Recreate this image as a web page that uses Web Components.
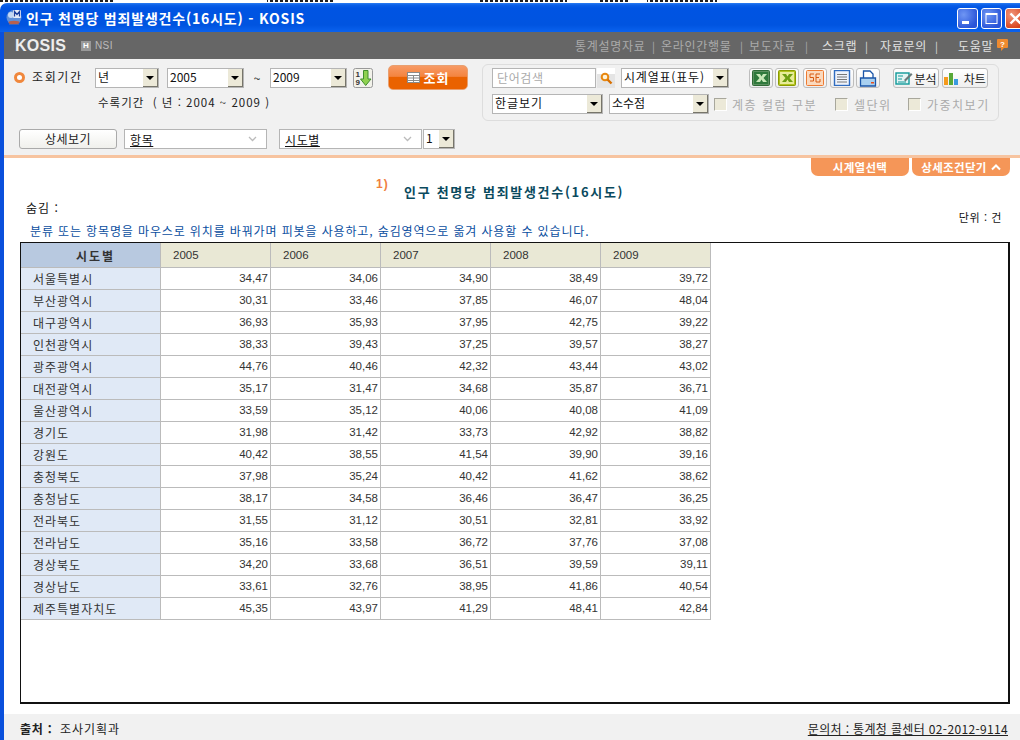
<!DOCTYPE html>
<html lang="ko">
<head>
<meta charset="utf-8">
<title>KOSIS</title>
<style>
    html, body { margin: 0; height: 100%; overflow: hidden; background: #fff; }
    body { font: 12px "Noto Sans CJK KR", "Liberation Sans", sans-serif; color: #222; }
</style>
</head>
<body>
<kosis-window>
    <xp-titlebar slot="titlebar">인구 천명당 범죄발생건수(16시도) - KOSIS</xp-titlebar>
    <kosis-nav slot="nav"></kosis-nav>
    <query-panel slot="query"></query-panel>
    <result-view slot="result"></result-view>
    <source-footer slot="footer"></source-footer>
</kosis-window>

<script>
/**
 * Helper: attach an open shadow root with the given markup.
 */
function mount(el, html){
    el.attachShadow({mode: 'open'}).innerHTML = html;
}

class KosisWindow extends HTMLElement {
    connectedCallback(){
        mount(this, `
<style>
    :host { display: flex; flex-direction: column; width: 1020px; height: 740px; overflow: hidden; }
    /* the window behind only shows the bottoms of its text and icons */
    .strip {
        flex: none; height: 3px; background-color: #fff;
        background-image:
            repeating-linear-gradient(90deg, transparent 0 3px, #fff 3px 5px),
            linear-gradient(90deg, #222 0 115px, #fff 115px 267px, #222 267px 333px, #fff 333px 480px, #222 480px 567px, #fff 567px 600px, #222 600px 630px, #fff 630px 647px, #222 647px 717px, #fff 717px),
            linear-gradient(90deg, #fff 135px, #3a86d8 135px 148px, #fff 148px 160px, #ccc 160px 216px, #fff 216px 240px, #3a86d8 240px 248px, #fff 248px 340px, #3a86d8 340px 347px, #fff 347px 460px, #3a86d8 460px 467px, #fff 467px 580px, #3a86d8 580px 590px, #fff 590px);
        background-size: 100% 2px; background-repeat: no-repeat;
    }
    .frame { flex: 1; min-height: 0; display: flex; flex-direction: column; border-left: 4px solid #0a50dc; }
</style>
<div class="strip"></div>
<slot name="titlebar"></slot>
<div class="frame">
    <slot name="nav"></slot>
    <slot name="query"></slot>
    <slot name="result"></slot>
    <slot name="footer"></slot>
</div>`);
    }
}

class XpTitlebar extends HTMLElement {
    connectedCallback(){
        mount(this, `
<style>
    :host { display: flex; align-items: center; height: 29px; padding-left: 6px; color: #fff; overflow: hidden;
        font: bold 14px "Noto Sans CJK KR", "Liberation Sans", sans-serif;
        border-top-left-radius: 7px;
        background: linear-gradient(#2b7df2 0, #0a5fe8 2px, #0054e3 5px, #0054e0 22px, #0a62ee 100%); }
    .logo { flex: none; margin-right: 4px; }
    .title { flex: 1; white-space: nowrap; letter-spacing: .8px; }
    .btns { flex: none; display: flex; gap: 3px; margin-right: -6px; margin-top: 2px; }
    .btn { width: 21px; height: 21px; border: 1px solid #fff; border-radius: 3px; box-sizing: border-box; display: block; }
    .b { background: radial-gradient(circle at 30% 30%, #6f96f4, #2a55d8 75%); }
    .r { background: radial-gradient(circle at 30% 30%, #f0977c, #d8431c 75%); }
</style>
<svg class="logo" width="16" height="18" viewBox="0 0 16 18">
    <circle cx="8" cy="8.500" r="7.500" fill="#5f8fd8"/>
    <circle cx="5" cy="6" r="3" fill="#c4d8f4"/>
    <rect x="7" y="1" width="8" height="8" rx="1" fill="#e6ecf8"/>
    <path d="M8.500 7.500 V2.500 L11 5.500 L13.500 2.500 V7.500" fill="none" stroke="#1c3f9c" stroke-width="1.300"/>
    <ellipse cx="8" cy="13.500" rx="5.500" ry="1.800" fill="#b8604e"/>
    <path d="M3 15.500 H13" stroke="#3f66b8" stroke-width="1.200"/>
</svg>
<span class="title"><slot></slot></span>
<span class="btns">
    <span class="btn b"><svg width="19" height="19" viewBox="0 0 19 19"><rect x="4" y="12" width="7" height="3" fill="#fff"/></svg></span>
    <span class="btn b"><svg width="19" height="19" viewBox="0 0 19 19"><rect x="4" y="4.500" width="11" height="10" fill="none" stroke="#fff"/><rect x="4" y="4" width="11" height="2" fill="#fff"/></svg></span>
    <span class="btn r"><svg width="19" height="19" viewBox="0 0 19 19"><path d="M4.500 4.500 L14.500 14.500 M14.500 4.500 L4.500 14.500" stroke="#fff" stroke-width="2.400"/></svg></span>
</span>`);
    }
}

class KosisNav extends HTMLElement {
    connectedCallback(){
        mount(this, `
<style>
    :host { display: flex; align-items: center; height: 27px; background: #666; color: #c8c8c8; font-size: 12px; white-space: nowrap; }
    .brand { font: bold 16px "Liberation Sans", sans-serif; color: #eee; margin-left: 11px; width: 55px; letter-spacing: .3px; }
    .h { width: 10px; height: 10px; background: #999; color: #fff; font: bold 8px/10px "Liberation Sans", sans-serif; text-align: center; margin-left: 11px; }
    .nsi { font: 10px "Liberation Sans", sans-serif; color: #bbb; margin-left: 4px; flex: 1; letter-spacing: .4px; }
    a { color: #aaa; letter-spacing: .7px; }
    .s { color: #aaa; width: 9px; font-size: 11px; }
    .lit { color: #e2e2e2; }
    .ls { color: #ddd; }
    svg { margin-right: 12px; }
</style>
<span class="brand">KOSIS</span><span class="h">H</span><span class="nsi">NSI</span>
<a style="width:77px">통계설명자료</a><span class="s">|</span>
<a style="width:79px">온라인간행물</a><span class="s">|</span>
<a style="width:56px">보도자료</a><span class="s" style="width:17px">|</span>
<a class="lit" style="width:43px">스크랩</a><span class="s ls" style="width:15px">|</span>
<a class="lit" style="width:55px">자료문의</a><span class="s ls" style="width:23px">|</span>
<a class="lit" style="width:39px">도움말</a>
<svg width="11" height="13" viewBox="0 0 11 13"><path d="M1 0 H10 Q11 0 11 1 V8 Q11 9 10 9 H7 L4 12 V9 H1 Q0 9 0 8 V1 Q0 0 1 0 Z" fill="#ef8a2e"/><text x="5.500" y="8" font-size="8" font-weight="bold" fill="#fff" text-anchor="middle" font-family="Liberation Sans">?</text></svg>`);
    }
}

class ComboBox extends HTMLElement {
    connectedCallback(){
        mount(this, `
<style>
    :host { display: flex; box-sizing: border-box; height: 20px; flex: none; border: 1px solid #b5b5b5; background: #fff; color: #111; font-size: 12px; }
    .v { flex: 1; padding-left: 2px; line-height: 16px; white-space: nowrap; overflow: hidden; }
    .arrow { flex: none; width: 15px; background: #ece9d8; border-right: 1px solid #77756a; border-bottom: 1px solid #77756a; box-sizing: border-box; position: relative; }
    .arrow::after { content: ""; position: absolute; left: 3px; top: 7px; border: 4px solid transparent; border-top: 4px solid #000; border-bottom: 0; }
</style>
<span class="v"><slot></slot></span><span class="arrow"></span>`);
    }
}

class PivotSelect extends HTMLElement {
    connectedCallback(){
        mount(this, `
<style>
    :host { display: flex; align-items: center; box-sizing: border-box; height: 20px; flex: none; border: 1px solid #b5b5b5; background: #fff; color: #111; font-size: 12px; padding: 0 9px 0 5px; justify-content: space-between; }
    span { text-decoration: underline; line-height: 17px; letter-spacing: .6px; }
    svg { flex: none; }
</style>
<span><slot></slot></span>
<svg width="9" height="6" viewBox="0 0 9 6"><path d="M1 1 L4.500 4.500 L8 1" fill="none" stroke="#bbb" stroke-width="1.300"/></svg>`);
    }
}

class ToolIcon extends HTMLElement {
    connectedCallback(){
        mount(this, `
<style>
    :host { display: inline-flex; align-items: center; justify-content: center; flex: none; box-sizing: border-box; height: 20px; width: 24px; border: 1px solid #bdbdbd; border-radius: 3px; background: linear-gradient(#fff, #efefef); font-size: 12px; color: #222; gap: 1px; }
</style>
<slot></slot>`);
    }
}

class QueryPanel extends HTMLElement {
    connectedCallback(){
        mount(this, `
<style>
    :host { display: flex; box-sizing: border-box; height: 96px; background: #f1f1f1; flex: none; font-size: 12px; color: #222; }
    .left { width: 478px; flex: none; padding-top: 6px; box-sizing: border-box; }
    .row1 { display: flex; align-items: center; height: 25px; }
    .radio { box-sizing: border-box; width: 11px; height: 11px; border: 3px solid #f0873c; border-radius: 50%; background: #fff; margin-left: 10px; flex: none; }
    .lbl { width: 63px; margin-left: 7px; flex: none; letter-spacing: 1.600px; margin-top: -2px; }
    .tilde { width: 26px; text-align: center; flex: none; }
    .sort { margin-left: 6px; flex: none; }
    .go { margin-left: 15px; width: 80px; height: 25px; box-sizing: border-box; flex: none; border-radius: 5px; color: #fff; font-weight: bold; font-size: 13px; display: flex; align-items: center; justify-content: center; gap: 4px; letter-spacing: 1px;
        background: linear-gradient(#f79a64, #f4843f 45%, #ea6200 50%, #ea6200); border: 1px solid #e9a070; }
    .row2 { margin: 5px 0 0 94px; height: 15px; line-height: 15px; white-space: pre; letter-spacing: 1px; font-size: 11.500px; }
    .row3 { display: flex; margin: 19px 0 0 15px; }
    .detail { width: 98px; height: 20px; box-sizing: border-box; border: 1px solid #aaa; border-radius: 3px; background: linear-gradient(#fff, #f0f0ec); text-align: center; line-height: 17px; margin-right: 7px; flex: none; letter-spacing: .4px; }
    .box { width: 517px; height: 57px; box-sizing: border-box; margin-top: 5px; border: 1px solid #ddd; border-radius: 6px; padding: 3px 0 0 9px; flex: none; }
    .r { display: flex; align-items: center; height: 20px; white-space: nowrap; }
    .r + .r { margin-top: 6px; }
    .search { box-sizing: border-box; width: 104px; height: 20px; border: 1px solid #b5b5b5; background: #fff; color: #aaa; padding-left: 4px; line-height: 17px; flex: none; letter-spacing: .6px; }
    .glass { width: 18px; height: 20px; margin-left: 1px; background: linear-gradient(#fff 30%, #e4e4e4 30%); flex: none; display: flex; align-items: center; justify-content: center; }
    .cb { box-sizing: border-box; width: 13px; height: 13px; background: #ece9d8; border: 1px solid #fff; border-top-color: #a8a79c; border-left-color: #a8a79c; flex: none; }
    .off { color: #aaa; flex: none; letter-spacing: 1.500px; }
</style>
<div class="left">
    <div class="row1">
        <span class="radio"></span><span class="lbl">조회기간</span>
        <combo-box style="width:64px">년</combo-box>
        <combo-box style="width:77px;margin-left:8px">2005</combo-box>
        <span class="tilde">~</span>
        <combo-box style="width:77px">2009</combo-box>
        <svg class="sort" width="20" height="20" viewBox="0 0 20 20">
            <rect x=".5" y=".5" width="19" height="19" rx="2" fill="#f2f2ea" stroke="#999"/>
            <text x="2.500" y="8.500" font-size="8" font-weight="bold" font-family="Liberation Sans" fill="#333">1</text>
            <text x="2.500" y="17" font-size="8" font-weight="bold" font-family="Liberation Sans" fill="#333">9</text>
            <path d="M10.500 2.500 H15 V11 H18 L12.700 17.500 L7.500 11 H10.500 Z" fill="#8fd14f" stroke="#3f8f2c"/>
        </svg>
        <span class="go">
            <svg width="13" height="11" viewBox="0 0 13 11"><rect x=".5" y=".5" width="12" height="10" fill="#fff" stroke="#8a8a8a"/><path d="M1 3.500 H12 M1 6 H12 M1 8.500 H12 M6.500 3 V10" stroke="#8a8a8a"/></svg>조회
        </span>
    </div>
    <div class="row2">수록기간  ( 년 : 2004 ~ 2009 )</div>
    <div class="row3">
        <span class="detail">상세보기</span>
        <pivot-select style="width:143px;margin-right:12px">항목</pivot-select>
        <pivot-select style="width:143px;margin-right:1px">시도별</pivot-select>
        <combo-box style="width:32px">1</combo-box>
    </div>
</div>
<div class="box">
    <div class="r">
        <span class="search">단어검색</span>
        <span class="glass"><svg width="13" height="13" viewBox="0 0 13 13"><circle cx="5" cy="5" r="3.300" fill="#fff3d8" stroke="#e8870f" stroke-width="2"/><path d="M7.500 7.500 L11.500 11.500" stroke="#d86f00" stroke-width="2.400"/></svg></span>
        <combo-box style="width:108px;margin-left:6px;letter-spacing:.8px">시계열표(표두)</combo-box>
        <tool-icon style="margin-left:20px"><svg width="18" height="16" viewBox="0 0 18 16"><rect x=".5" y=".5" width="17" height="15" rx="1" fill="#5c9060" stroke="#2f6b36"/><rect x="2" y="2" width="14" height="12" fill="#2f7a3c"/><path d="M4 4 H8 L9.500 6.500 L11 4 H15 L11.500 8 L15 12 H11 L9.500 9.500 L8 12 H4 L7.500 8 Z" fill="#c8e8b8"/></svg></tool-icon>
        <tool-icon style="margin-left:2px"><svg width="18" height="16" viewBox="0 0 18 16"><rect x=".5" y=".5" width="17" height="15" rx="1" fill="#b4c420" stroke="#8a9a00"/><rect x="2" y="2" width="14" height="12" fill="#e8ec98"/><path d="M4 4 H8 L9.500 6.500 L11 4 H15 L11.500 8 L15 12 H11 L9.500 9.500 L8 12 H4 L7.500 8 Z" fill="#6e9e10"/></svg></tool-icon>
        <tool-icon style="margin-left:4px"><svg width="18" height="16" viewBox="0 0 18 16"><rect x=".5" y=".5" width="17" height="15" rx="1" fill="#fbd9bd" stroke="#ee7a30"/><path d="M8 4 H4 V7.500 H7.500 V11 H4 M14 4 H10 V7.500 H13 M10 7.500 V12 H14 V9" fill="none" stroke="#d85a10"/></svg></tool-icon>
        <tool-icon style="margin-left:3px"><svg width="18" height="16" viewBox="0 0 18 16"><rect x="1.500" y=".5" width="15" height="15" fill="#eef3fb" stroke="#2f6cc0" stroke-width="1.400"/><path d="M4 4.500 H14 M4 7 H14 M4 9.500 H14 M4 12 H14" stroke="#777"/></svg></tool-icon>
        <tool-icon style="margin-left:2px"><svg width="18" height="17" viewBox="0 0 18 17"><path d="M4.500 8 V1 H11 L14 4 V8" fill="#fff" stroke="#1a55a8" stroke-width="1.300"/><path d="M1.500 8 H16.500 V16 H1.500 Z" fill="#a8d0f0" stroke="#1a55a8" stroke-width="1.300"/><rect x="12" y="12" width="3" height="1.500" fill="#e8501c"/></svg></tool-icon>
        <tool-icon style="width:46px;margin-left:13px"><svg width="18" height="14" viewBox="0 0 18 14"><rect x="1" y="2" width="13" height="11" fill="#e4f5f5" stroke="#109a9a" stroke-width="1.400"/><path d="M3 5 H8 M3 8 H7 M3 11 H11" stroke="#109a9a" stroke-width="1.200"/><path d="M9 9 L16 2 L17.500 3.500 L10.500 10.500 Z" fill="#6a7a7a"/></svg>분석</tool-icon>
        <tool-icon style="width:46px;margin-left:3px"><svg width="15" height="13" viewBox="0 0 15 13"><rect x="0" y="5" width="4" height="8" fill="#f59a1c"/><rect x="5" y="1" width="4" height="12" fill="#58a838"/><rect x="10" y="7" width="4" height="6" fill="#3a9ae0"/></svg>&nbsp;차트</tool-icon>
    </div>
    <div class="r">
        <combo-box style="width:111px;letter-spacing:1px">한글보기</combo-box>
        <combo-box style="width:100px;margin-left:6px">소수점</combo-box>
        <span class="cb" style="margin-left:5px"></span><span class="off" style="width:85px;margin-left:5px">계층 컬럼 구분</span>
        <span class="cb" style="margin-left:18px"></span><span class="off" style="width:37px;margin-left:6px">셀단위</span>
        <span class="cb" style="margin-left:17px"></span><span class="off" style="margin-left:6px">가중치보기</span>
    </div>
</div>`);
    }
}

class StatsTable extends HTMLElement {
    static years = ['2005', '2006', '2007', '2008', '2009'];
    static rows = [
        ['서울특별시', '34,47', '34,06', '34,90', '38,49', '39,72'],
        ['부산광역시', '30,31', '33,46', '37,85', '46,07', '48,04'],
        ['대구광역시', '36,93', '35,93', '37,95', '42,75', '39,22'],
        ['인천광역시', '38,33', '39,43', '37,25', '39,57', '38,27'],
        ['광주광역시', '44,76', '40,46', '42,32', '43,44', '43,02'],
        ['대전광역시', '35,17', '31,47', '34,68', '35,87', '36,71'],
        ['울산광역시', '33,59', '35,12', '40,06', '40,08', '41,09'],
        ['경기도', '31,98', '31,42', '33,73', '42,92', '38,82'],
        ['강원도', '40,42', '38,55', '41,54', '39,90', '39,16'],
        ['충청북도', '37,98', '35,24', '40,42', '41,62', '38,62'],
        ['충청남도', '38,17', '34,58', '36,46', '36,47', '36,25'],
        ['전라북도', '31,55', '31,12', '30,51', '32,81', '33,92'],
        ['전라남도', '35,16', '33,58', '36,72', '37,76', '37,08'],
        ['경상북도', '34,20', '33,68', '36,51', '39,59', '39,11'],
        ['경상남도', '33,61', '32,76', '38,95', '41,86', '40,54'],
        ['제주특별자치도', '45,35', '43,97', '41,29', '48,41', '42,84']
    ];

    connectedCallback(){
        let head = StatsTable.years.map(y => `<span class="cell year">${y}</span>`).join('');
        let body = StatsTable.rows.map(row => {
            let nums = row.slice(1).map(n => `<span class="cell num">${n}</span>`).join('');
            return `<span class="cell name">${row[0]}</span>${nums}`;
        }).join('');
        mount(this, `
<style>
    :host { display: block; box-sizing: border-box; height: 462px; margin: 0 10px 0 16px; border: 2px solid #111; border-width: 1.500px 2px 2px 1.500px; background: #fff; overflow: hidden; }
    .grid { display: grid; grid-template-columns: 140px repeat(5, 110px); grid-template-rows: 25px repeat(16, 22px); width: max-content; }
    .cell { box-sizing: border-box; display: flex; align-items: center; border-right: 1px solid #bbb; border-bottom: 1px solid #bbb; color: #333; }
    .corner { background: #b8c9e0; font-weight: bold; justify-content: center; padding-left: 10px; font-size: 12px; letter-spacing: 2px; }
    .year { background: #e9e8d5; padding-left: 12px; font: 11.500px "Liberation Sans", sans-serif; }
    .name { background: #e0e9f6; padding: 0 0 1px 12px; letter-spacing: 1px; }
    .num { justify-content: flex-end; padding: 0 2px 1px 0; font: 11.500px "Liberation Sans", sans-serif; }
</style>
<div class="grid"><span class="cell corner">시도별</span>${head}${body}</div>`);
    }
}

class ResultView extends HTMLElement {
    connectedCallback(){
        mount(this, `
<style>
    :host { display: block; flex: 1; min-height: 0; background: #fff; border-top: 3px solid #f7c4a0; font-size: 12px; color: #111; }
    .tabs { display: flex; justify-content: flex-end; gap: 3px; height: 18px; padding-right: 10px; }
    .tab { box-sizing: border-box; display: flex; align-items: center; justify-content: center; gap: 4px; width: 98px; height: 18px; background: #f59658; color: #fff; font-weight: bold; font-size: 11.500px; letter-spacing: .3px; border-radius: 0 0 7px 7px; white-space: nowrap; }
    .head { position: relative; height: 66px; }
    .sup { position: absolute; left: 372px; top: 1px; color: #f08040; font: bold 12px "Liberation Sans", sans-serif; letter-spacing: 1px; }
    .title { position: absolute; left: 400px; top: 6px; color: #0a4a5e; font-weight: bold; font-size: 13px; letter-spacing: 1.700px; white-space: nowrap; }
    .hide { position: absolute; left: 22px; top: 23px; letter-spacing: 1px; }
    .unit { position: absolute; right: 18px; top: 33px; font-size: 11px; letter-spacing: .6px; }
    .note { position: absolute; left: 26px; top: 46px; color: #0a4ea0; white-space: nowrap; letter-spacing: .87px; }
</style>
<div class="tabs"><span class="tab">시계열선택</span><span class="tab">상세조건닫기<svg width="10" height="7" viewBox="0 0 10 7"><path d="M1 5.500 L5 1.500 L9 5.500" fill="none" stroke="#fff" stroke-width="2"/></svg></span></div>
<div class="head">
    <span class="sup">1)</span>
    <span class="title">인구 천명당 범죄발생건수(16시도)</span>
    <span class="hide">숨김 :</span>
    <span class="unit">단위 : 건</span>
    <span class="note">분류 또는 항목명을 마우스로 위치를 바꿔가며 피봇을 사용하고, 숨김영역으로 옮겨 사용할 수 있습니다.</span>
</div>
<stats-table></stats-table>`);
    }
}

class SourceFooter extends HTMLElement {
    connectedCallback(){
        mount(this, `
<style>
    :host { display: flex; flex: none; align-items: center; justify-content: space-between; height: 26px; padding: 3px 12px 0 16px; box-sizing: border-box; background: #f1f1f1; font-size: 12px; color: #222; }
    b { margin-right: 3px; letter-spacing: .8px; }
    span { letter-spacing: 1px; }
    u { letter-spacing: .35px; }
</style>
<span><b>출처 :</b> 조사기획과</span><u>문의처 : 통계청 콜센터 02-2012-9114</u>`);
    }
}

window.customElements.define('kosis-window', KosisWindow);
window.customElements.define('xp-titlebar', XpTitlebar);
window.customElements.define('kosis-nav', KosisNav);
window.customElements.define('combo-box', ComboBox);
window.customElements.define('pivot-select', PivotSelect);
window.customElements.define('tool-icon', ToolIcon);
window.customElements.define('query-panel', QueryPanel);
window.customElements.define('stats-table', StatsTable);
window.customElements.define('result-view', ResultView);
window.customElements.define('source-footer', SourceFooter);
</script>
</body>
</html>
